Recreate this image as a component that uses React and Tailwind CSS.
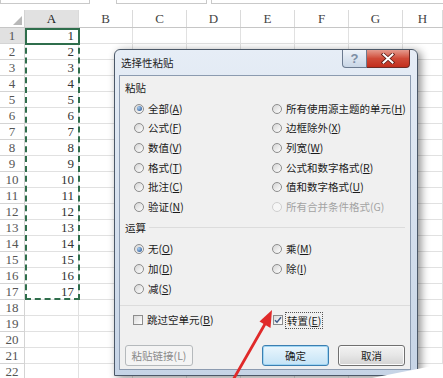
const rows = Array.from({ length: 22 }, (_, i) => i + 1);
const cols = ['A', 'B', 'C', 'D', 'E', 'F', 'G', 'H'];

function Radio({ checked, disabled }) {
    return (
        <span
            className={`flex h-[10px] w-[10px] shrink-0 items-center justify-center rounded-full border ${
                disabled ? 'border-[#cfcfcf] bg-[#f6f6f6]' : 'border-[#8d8d8d] bg-gradient-to-br from-[#d4d4d4] to-[#ffffff]'
            }`}
        >
            {checked && <span className="h-[5px] w-[5px] rounded-full bg-[radial-gradient(circle_at_35%_35%,#a9cdf0,#1b4a8c)]" />}
        </span>
    );
}

function Check({ checked }) {
    return (
        <span className="flex h-[10px] w-[10px] shrink-0 items-center justify-center border border-[#8d8d8d] bg-gradient-to-br from-[#dadada] to-[#ffffff]">
            {checked && (
                <svg width="8" height="8" viewBox="0 0 8 8">
                    <path d="M1 4.2 L3 6.3 L7 1.2" fill="none" stroke="#3d5a8a" strokeWidth="1.4" />
                </svg>
            )}
        </span>
    );
}

function Label({ text, k, disabled }) {
    return (
        <span className={disabled ? 'text-[#a3a3a3]' : 'text-[#1b1b1b]'}>
            {text}(
            {disabled ? k : <span className="underline underline-offset-[1px]">{k}</span>})
        </span>
    );
}

function Opt({ text, k, checked, disabled }) {
    return (
        <div className="flex h-[19.6px] items-center gap-[4px]">
            <Radio checked={checked} disabled={disabled} />
            <Label text={text} k={k} disabled={disabled} />
        </div>
    );
}

function Button({ children, primary, disabled }) {
    const tone = disabled
        ? 'border-[#b5b9bc] bg-[#f4f4f4] text-[#8a8a8a]'
        : primary
          ? 'border-[#3c7fb1] bg-gradient-to-b from-[#eaf6fd] to-[#c4e3f6] text-[#1b1b1b] shadow-[inset_0_0_0_1px_#9fd5f3]'
          : 'border-[#707070] bg-gradient-to-b from-[#f3f3f3] via-[#e6e6e6] to-[#d3d3d3] text-[#1b1b1b] shadow-[inset_0_0_0_1px_#fbfbfb]';
    return (
        <div className={`flex h-[21px] items-center justify-center rounded-[3px] border ${tone}`}>{children}</div>
    );
}

function Sheet() {
    return (
        <div className="flex flex-col font-['Liberation_Serif',serif] text-[13px]">
            <div className="flex h-[10px] items-start">
                <div className="h-[4px] w-[90px] border border-t-0 border-[#c9c9c9]" />
                <div className="ml-[26px] h-[4px] w-[91px] border border-t-0 border-[#c9c9c9]" />
                <div className="ml-[4px] h-[4px] flex-1 border border-t-0 border-r-0 border-[#c9c9c9]" />
            </div>
            <div className="flex h-[18px] border-b border-[#c6c6c6] text-[#444]">
                <div className="relative w-[25px] border-r border-[#d4d4d4]">
                    <div className="absolute bottom-[2px] right-[2px] h-0 w-0 border-b-[9px] border-l-[9px] border-b-[#b8b8b8] border-l-transparent" />
                </div>
                {cols.map((c, i) => (
                    <div
                        key={c}
                        className={`flex items-center justify-center border-r border-[#dadada] ${
                            i === 7 ? 'flex-1' : 'w-[54px]'
                        } ${i === 0 ? 'bg-[#e1e1e1] text-[#222]' : ''}`}
                    >
                        {c}
                    </div>
                ))}
            </div>
            {rows.map((r) => (
                <div key={r} className="flex h-[16px] text-[#333]">
                    <div
                        className={`flex w-[25px] items-center justify-center border-b border-r border-[#d4d4d4] text-[#555] ${
                            r === 1 ? 'bg-[#e1e1e1] text-[#222]' : ''
                        }`}
                    >
                        {r}
                    </div>
                    {cols.map((c, i) => (
                        <div
                            key={c}
                            className={`flex items-center justify-end border-b border-r border-[#e1e1e1] pr-[4px] ${
                                i === 7 ? 'flex-1' : 'w-[54px]'
                            }`}
                        >
                            {i === 0 && r <= 17 ? r : ''}
                        </div>
                    ))}
                </div>
            ))}
        </div>
    );
}

function Dialog() {
    return (
        <div className="absolute left-[114px] top-[49px] flex w-[304px] flex-col rounded-t-[6px] border border-[#4b5868] bg-gradient-to-b from-[#e6edf6] to-[#c6d4e6] shadow-[3px_2px_8px_rgba(0,0,0,0.45)] font-['Noto_Sans_CJK_SC',sans-serif] text-[10.5px]">
            <div className="flex h-[25px] items-start justify-between pl-[6px] pr-[7px]">
                <div className="pt-[6px] text-[10.5px] leading-[14px] text-[#1e1e1e]">选择性粘贴</div>
                <div className="flex">
                    <div className="flex h-[18px] w-[25px] items-center justify-center rounded-bl-[4px] border border-t-0 border-[#6b7a8f] bg-gradient-to-b from-[#eef3f9] to-[#c9d6e6]">
                        <span className="font-['Liberation_Sans',sans-serif] text-[13px] font-bold leading-none text-[#7d8ea5]">?</span>
                    </div>
                    <div className="flex h-[18px] w-[43px] items-center justify-center rounded-br-[4px] border border-l-0 border-t-0 border-[#6e2a24] bg-gradient-to-b from-[#e49a8e] via-[#cf4a38] to-[#c22d1c]">
                        <svg width="14" height="11" viewBox="0 0 14 11">
                            <path d="M2.5 1.5 L11.5 9.5 M11.5 1.5 L2.5 9.5" stroke="#5a1a14" strokeWidth="3.6" strokeLinecap="square" />
                            <path d="M2.5 1.5 L11.5 9.5 M11.5 1.5 L2.5 9.5" stroke="#ffffff" strokeWidth="2" strokeLinecap="square" />
                        </svg>
                    </div>
                </div>
            </div>
            <div className="mx-[4px] mb-[5px] mr-[6px] flex h-[295px] flex-col border border-[#8c9bb0] bg-[#f0f0f0] pt-[5px] leading-[14px]">
                <div className="flex h-[14px] items-center pl-[5px] text-[#1b1b1b]">粘贴</div>
                <div className="mt-[4px] grid grid-cols-[138px_1fr] pl-[14px]">
                    <div className="flex flex-col">
                        <Opt text="全部" k="A" checked />
                        <Opt text="公式" k="F" />
                        <Opt text="数值" k="V" />
                        <Opt text="格式" k="T" />
                        <Opt text="批注" k="C" />
                        <Opt text="验证" k="N" />
                    </div>
                    <div className="flex flex-col">
                        <Opt text="所有使用源主题的单元" k="H" />
                        <Opt text="边框除外" k="X" />
                        <Opt text="列宽" k="W" />
                        <Opt text="公式和数字格式" k="R" />
                        <Opt text="值和数字格式" k="U" />
                        <Opt text="所有合并条件格式" k="G" disabled />
                    </div>
                </div>
                <div className="mt-[4px] flex h-[14px] items-center gap-[3px] pl-[5px] pr-[5px] text-[#1b1b1b]">
                    <span>运算</span>
                    <div className="h-px flex-1 bg-[#dcdcdc]" />
                </div>
                <div className="mt-[5px] grid grid-cols-[138px_1fr] pl-[14px]">
                    <div className="flex flex-col">
                        <Opt text="无" k="O" checked />
                        <Opt text="加" k="D" />
                        <Opt text="减" k="S" />
                    </div>
                    <div className="flex flex-col">
                        <Opt text="乘" k="M" />
                        <Opt text="除" k="I" />
                    </div>
                </div>
                <div className="mt-[7px] h-px bg-[#dcdcdc]" />
                <div className="mt-[5px] grid h-[18px] grid-cols-[140px_1fr] items-center pl-[13px]">
                    <div className="flex items-center gap-[4px]">
                        <Check />
                        <Label text="跳过空单元" k="B" />
                    </div>
                    <div className="flex items-center gap-[2px]">
                        <Check checked />
                        <span className="border border-dotted border-[#555] px-[1px] leading-[15px]">
                            <Label text="转置" k="E" />
                        </span>
                    </div>
                </div>
                <div className="mt-[16px] flex justify-between px-[5px]">
                    <div className="w-[68px]">
                        <Button disabled>粘贴链接(L)</Button>
                    </div>
                    <div className="flex gap-[9px]">
                        <div className="w-[67px]">
                            <Button primary>确定</Button>
                        </div>
                        <div className="w-[67px]">
                            <Button>取消</Button>
                        </div>
                    </div>
                </div>
            </div>
        </div>
    );
}

export default function App() {
    return (
        <div className="relative h-[378px] w-[443px] overflow-hidden bg-white">
            <Sheet />
            <div className="pointer-events-none absolute left-[25px] top-[28px] h-[272px] w-[55px] border-2 border-dashed border-[#2f6e4c]" />
            <div className="pointer-events-none absolute left-[25px] top-[28px] h-[17px] w-[55px] border-2 border-[#2f6e4c]" />
            <Dialog />
            <svg className="pointer-events-none absolute inset-0" width="443" height="378" viewBox="0 0 443 378">
                <path d="M233 380 L265 324" stroke="#e02a2a" strokeWidth="2.8" strokeLinecap="round" />
                <polygon points="272,310 270.5,328 259.5,321.5" fill="#e02a2a" />
                <polygon points="372,378 402,372 443,364 443,378" fill="#ffffff" />
            </svg>
        </div>
    );
}
